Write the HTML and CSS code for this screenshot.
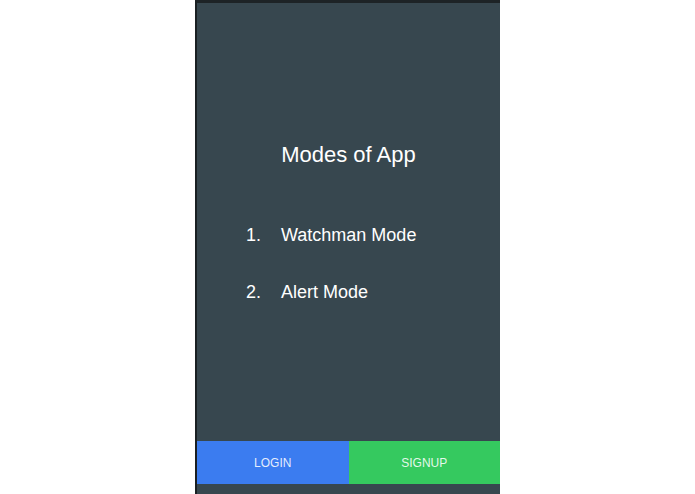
FILE: index.html
```html
<!DOCTYPE html>
<html>
<head>
<meta charset="utf-8">
<link rel="stylesheet" href="styles.css">
</head>
<body>
<div class="page">
  <div class="phone">
    <div class="content">
      <h1 class="title">Modes of App</h1>
      <ol class="modes">
        <li class="mode"><span class="num">1.</span><span class="label">Watchman Mode</span></li>
        <li class="mode"><span class="num">2.</span><span class="label">Alert Mode</span></li>
      </ol>
    </div>
    <div class="actions">
      <button class="btn btn-login">LOGIN</button>
      <button class="btn btn-signup">SIGNUP</button>
    </div>
  </div>
</div>
</body>
</html>
```
FILE: styles.css
```css
html, body {
  margin: 0;
  padding: 0;
  background: #ffffff;
  font-family: "Liberation Sans", Arial, sans-serif;
}
.page {
  display: flex;
  justify-content: center;
  height: 494px;
}
.phone {
  width: 305px;
  height: 494px;
  box-sizing: border-box;
  background: #37474f;
  border-top: 3px solid #1d2326;
  border-left: 2px solid #1a2023;
  display: flex;
  flex-direction: column;
  padding-bottom: 10px;
}
.content {
  flex: 1;
  padding-top: 139px;
  color: #ffffff;
}
.title {
  margin: 0;
  font-size: 22px;
  line-height: 26px;
  font-weight: normal;
  text-align: center;
}
.modes {
  list-style: none;
  margin: 56px 0 0 0;
  padding: 0 0 0 49px;
  display: flex;
  flex-direction: column;
  gap: 35px;
}
.mode {
  display: flex;
  font-size: 18px;
  line-height: 22px;
}
.num {
  width: 35px;
}
.actions {
  display: flex;
  height: 43px;
}
.btn {
  flex: 1;
  border: none;
  margin: 0;
  padding: 0;
  font-family: "Liberation Sans", Arial, sans-serif;
  font-size: 12px;
  color: rgba(255, 255, 255, 0.88);
}
.btn-login {
  background: #3b7cf0;
}
.btn-signup {
  background: #35c95f;
}
```
